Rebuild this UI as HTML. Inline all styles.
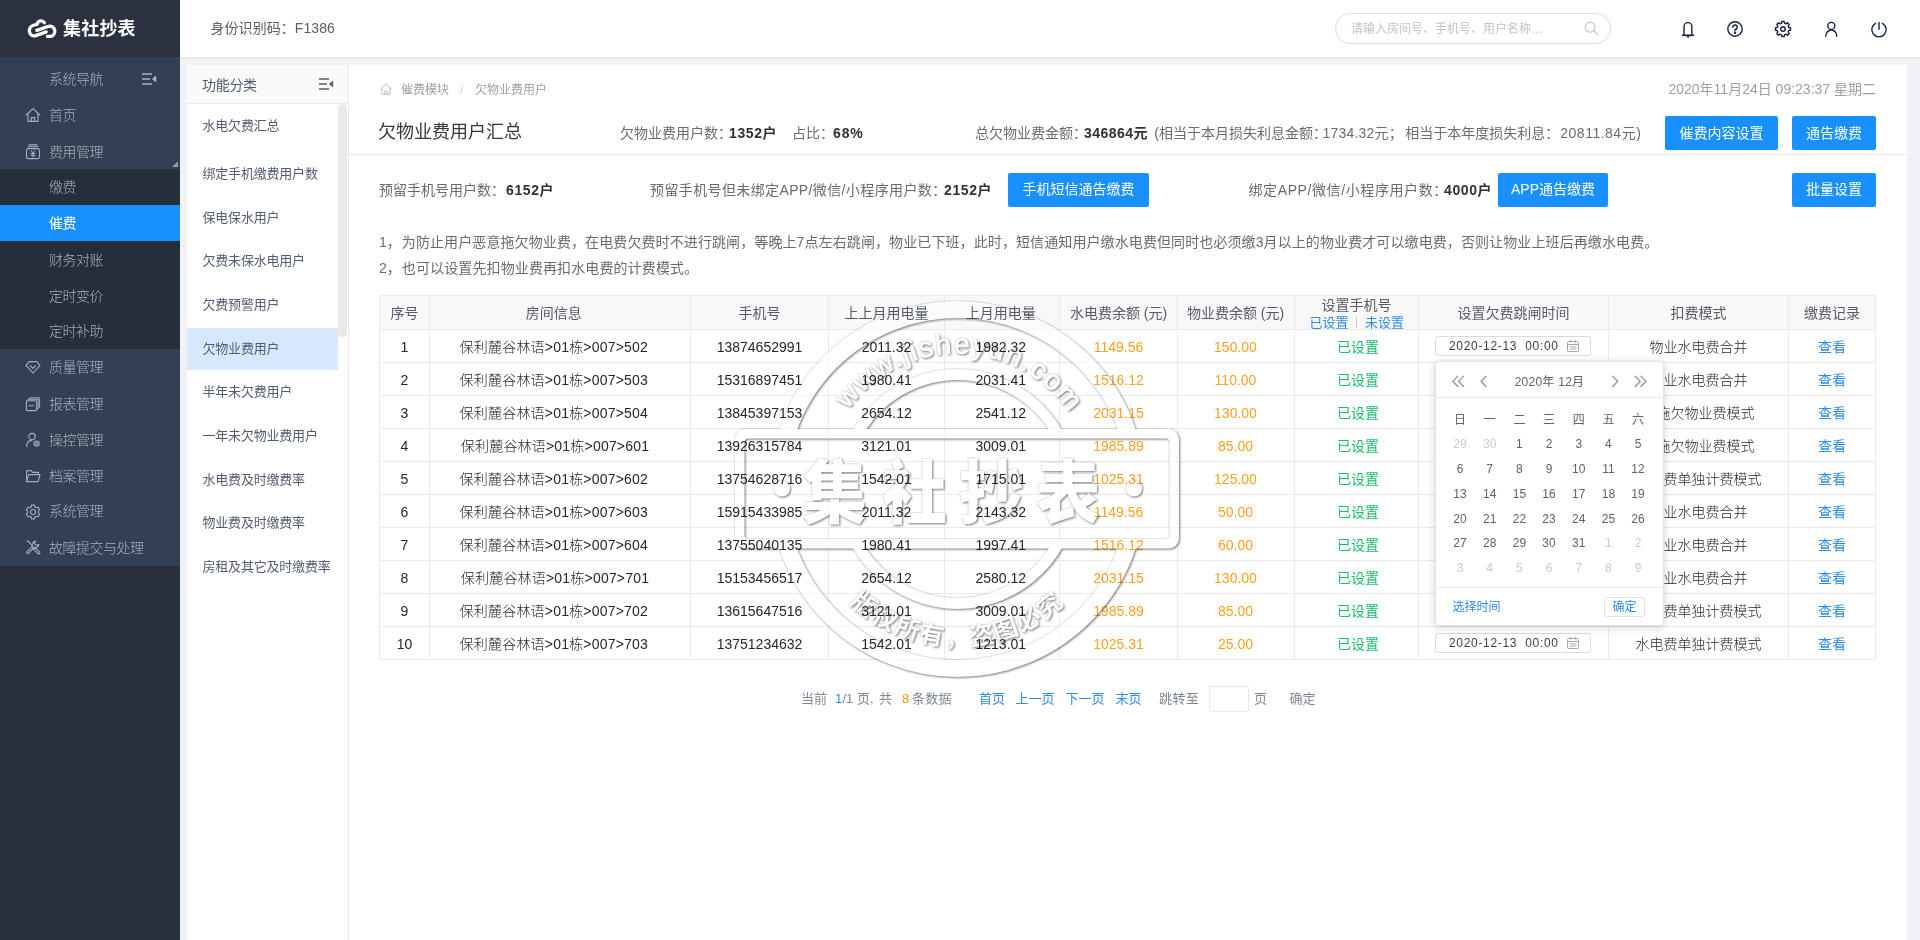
<!DOCTYPE html>
<html lang="zh-CN"><head><meta charset="utf-8"><title>欠物业费用户汇总</title>
<style>
*{box-sizing:border-box;margin:0;padding:0}
html,body{width:1920px;height:940px;overflow:hidden}
body{background:#f0f2f5;font-family:"Liberation Sans","Noto Sans CJK SC",sans-serif;position:relative;-webkit-font-smoothing:antialiased;font-weight:300}
.t{position:absolute;white-space:nowrap;display:block}
.a{position:absolute}
svg{position:absolute;overflow:visible}
.ic{fill:none;stroke:#a4aebf;stroke-width:1.1;stroke-linecap:round;stroke-linejoin:round}
.hic{fill:none;stroke:#14233c;stroke-width:1.4;stroke-linecap:round;stroke-linejoin:round}
.btn{position:absolute;background:#1890ff;color:#fff;font-size:14px;font-weight:400;border-radius:2px;text-align:center;white-space:nowrap}
</style></head><body><div id="app" style="position:absolute;left:0;top:0;width:1920px;height:940px;will-change:transform">

<div class="a" style="left:0;top:0;width:180px;height:940px;background:#2a303d"></div>
<div class="a" style="left:0;top:0;width:180px;height:57px;background:#2a313f"></div>
<div class="a" style="left:0;top:57px;width:180px;height:509px;background:#353f53"></div>
<div class="a" style="left:0;top:169px;width:180px;height:180px;background:#272e3b"></div>
<div class="a" style="left:0;top:205px;width:180px;height:36px;background:#1890ff"></div>
<svg style="left:27px;top:19px" width="29" height="20" viewBox="0 0 29 20"><g fill="none" stroke="#fff" stroke-width="3.3" stroke-linecap="round" stroke-linejoin="round"><path d="M17.4 3.7A3.9 3.9 0 0 0 10.2 5.4C6 5.6 2.2 8 2.3 12.2A4.9 4.9 0 0 0 8.8 16.6L19.2 12.9"/><path d="M9.8 11.4L21.6 7.3A5 5 0 1 1 23.8 17.3L20.4 17.4"/></g></svg>
<span class="t" style="top:18.5px;font-size:18px;color:#fff;line-height:20px;font-weight:700;left:63px;letter-spacing:0.2px;font-family:"Liberation Sans","Noto Sans CJK SC",sans-serif;">集社抄表</span>
<span class="t" style="top:69px;font-size:14px;color:#a6b0c1;line-height:20px;font-weight:300;left:49px;letter-spacing:-0.5px;">系统导航</span>
<svg style="left:142px;top:73px" width="16" height="12" viewBox="0 0 16 12"><path d="M0 1H10M0 6H8M0 11H10" stroke="#abb4c4" stroke-width="1.6" fill="none"/><path d="M14.2 2.6V9.4L9.9 6Z" fill="#abb4c4"/></svg>
<span class="t" style="top:105px;font-size:14px;color:#a6b0c1;line-height:20px;font-weight:300;left:49px;letter-spacing:-0.5px;">首页</span>
<span class="t" style="top:141.5px;font-size:14px;color:#a6b0c1;line-height:20px;font-weight:300;left:49px;letter-spacing:-0.5px;">费用管理</span>
<span class="t" style="top:357px;font-size:14px;color:#a6b0c1;line-height:20px;font-weight:300;left:49px;letter-spacing:-0.5px;">质量管理</span>
<span class="t" style="top:393.5px;font-size:14px;color:#a6b0c1;line-height:20px;font-weight:300;left:49px;letter-spacing:-0.5px;">报表管理</span>
<span class="t" style="top:430px;font-size:14px;color:#a6b0c1;line-height:20px;font-weight:300;left:49px;letter-spacing:-0.5px;">操控管理</span>
<span class="t" style="top:465.5px;font-size:14px;color:#a6b0c1;line-height:20px;font-weight:300;left:49px;letter-spacing:-0.5px;">档案管理</span>
<span class="t" style="top:501px;font-size:14px;color:#a6b0c1;line-height:20px;font-weight:300;left:49px;letter-spacing:-0.5px;">系统管理</span>
<span class="t" style="top:538px;font-size:14px;color:#a6b0c1;line-height:20px;font-weight:300;left:49px;letter-spacing:-0.5px;">故障提交与处理</span>
<span class="t" style="top:177px;font-size:14px;color:#a6b0c1;line-height:20px;font-weight:300;left:49px;letter-spacing:-0.5px;">缴费</span>
<span class="t" style="top:213px;font-size:14px;color:#fff;line-height:20px;font-weight:400;left:49px;letter-spacing:-0.5px;">催费</span>
<span class="t" style="top:250px;font-size:14px;color:#a6b0c1;line-height:20px;font-weight:300;left:49px;letter-spacing:-0.5px;">财务对账</span>
<span class="t" style="top:286px;font-size:14px;color:#a6b0c1;line-height:20px;font-weight:300;left:49px;letter-spacing:-0.5px;">定时变价</span>
<span class="t" style="top:320.8px;font-size:14px;color:#a6b0c1;line-height:20px;font-weight:300;left:49px;letter-spacing:-0.5px;">定时补助</span>
<svg style="left:172px;top:161px" width="6" height="6" viewBox="0 0 6 6"><path d="M6 0V6H0Z" fill="#8f9bb0"/></svg>
<svg class="ic" style="left:25px;top:107px" width="16" height="16" viewBox="0 0 16 16"><path d="M1.2 8 L8 1.6 L14.8 8"/><path d="M3 7.2V14.4H13V7.2"/><path d="M6.3 14.4V10.6H9.7V14.4"/></svg>
<svg class="ic" style="left:25px;top:143.5px" width="16" height="16" viewBox="0 0 16 16"><rect x="1.5" y="4.6" width="13" height="10" rx="1.6"/><path d="M2.8 2.7H13.2M3.9 0.9H12.1"/><path d="M6.2 6.8L8 9L9.8 6.8M8 9V13M6 9.6H10M6 11.4H10" stroke-width="1"/></svg>
<svg class="ic" style="left:25px;top:359px" width="16" height="16" viewBox="0 0 16 16"><path d="M4.2 2.6H11.8L15 6.4L8 14L1 6.4Z"/><path d="M5.4 6.6L8 9.4L10.6 6.6"/></svg>
<svg class="ic" style="left:25px;top:395.5px" width="16" height="16" viewBox="0 0 16 16"><rect x="1.4" y="4.8" width="10.2" height="9.8" rx="0.8"/><path d="M3 4.6V3.3H13.1V12.8H11.8M4.6 3.1V1.8H14.6V11.2H13.3" stroke-width="1"/><path d="M4.2 9.7H8.8"/></svg>
<svg class="ic" style="left:25px;top:432px" width="16" height="16" viewBox="0 0 16 16"><circle cx="7" cy="4.6" r="3.2"/><path d="M1.6 14.6C1.8 10.6 4 8.6 6.8 8.4"/><circle cx="11.6" cy="11.6" r="2.6"/><circle cx="11.6" cy="11.6" r="0.8"/></svg>
<svg class="ic" style="left:25px;top:467.5px" width="16" height="16" viewBox="0 0 16 16"><path d="M1.6 13.6V2.6H6.2L7.6 4.4H13.4V6.4"/><path d="M1.6 13.6L3.6 6.6H15L13 13.6Z"/></svg>
<svg class="ic" style="left:25px;top:504px" width="16" height="16" viewBox="0 0 16 16"><path d="M6.06 2.96L6.40 1.08L9.60 1.08L9.94 2.96L11.40 3.80L13.19 3.16L14.79 5.92L13.33 7.16L13.33 8.84L14.79 10.08L13.19 12.84L11.40 12.20L9.94 13.04L9.60 14.92L6.40 14.92L6.06 13.04L4.60 12.20L2.81 12.84L1.21 10.08L2.67 8.84L2.67 7.16L1.21 5.92L2.81 3.16L4.60 3.80Z" stroke-linejoin="round"/><circle cx="8" cy="8" r="2.5"/></svg>
<svg class="ic" style="left:25px;top:539.2px" width="16" height="16" viewBox="0 0 16 16"><path d="M1.7 13.1L7.1 7.7L8.5 9.1L3.1 14.5A1 1 0 0 1 1.7 13.1Z"/><path d="M7.3 7.5C6.5 5.3 7.7 2.7 10.5 2.1L9.4 4.4L11.6 6.6L13.9 5.5C13.3 8.3 10.7 9.5 8.5 8.7"/><path d="M2 2.5L3.4 2L4.7 3.9L7.5 6.7"/><path d="M9.9 8.3L14.5 12.9A1.1 1.1 0 0 1 12.9 14.5L8.3 9.9Z"/></svg>
<div class="a" style="left:180px;top:0;width:1740px;height:57px;background:#fff;box-shadow:0 1px 2px rgba(0,21,41,.08)"></div>
<span class="t" style="top:17.7px;font-size:14px;color:#5e5e5e;line-height:20px;font-weight:400;left:210.4px;letter-spacing:0.08px;">身份识别码：F1386</span>
<div class="a" style="left:1335px;top:13px;width:276px;height:31px;border:1px solid #dcdee2;border-radius:16px;background:#fff;box-shadow:0 0 2px rgba(0,0,0,.06)"></div>
<span class="t" style="top:18.5px;font-size:12px;color:#bfc3ca;line-height:20px;font-weight:400;left:1351px;">请输入房间号、手机号、用户名称…</span>
<svg style="left:1584px;top:21px" width="15" height="15" viewBox="0 0 15 15" fill="none" stroke="#c5c8ce" stroke-width="1.2" stroke-linecap="round"><circle cx="6.2" cy="6.2" r="5"/><path d="M10 10L14 14"/></svg>
<svg class="hic" style="left:1679px;top:19.5px" width="18" height="18" viewBox="0 0 18 18"><path d="M5.05 15.2V6.5A3.9 3.9 0 0 1 12.85 6.5V15.2M3.5 15.3H14.5"/><path d="M8.3 16.7H9.7" stroke-width="1.6"/></svg>
<svg class="hic" style="left:1726px;top:19.5px" width="18" height="18" viewBox="0 0 18 18"><circle cx="9" cy="9" r="7.2"/><path d="M6.8 7.2A2.2 2.2 0 1 1 9 9.4V10.6" stroke-width="1.4"/><circle cx="9" cy="12.8" r="0.5" fill="#1c2438"/></svg>
<svg class="hic" style="left:1774px;top:19.5px" width="18" height="18" viewBox="0 0 18 18"><path d="M7.55 3.18L7.75 1.50L10.25 1.50L10.45 3.18L12.09 3.86L13.41 2.81L15.19 4.59L14.14 5.91L14.82 7.55L16.50 7.75L16.50 10.25L14.82 10.45L14.14 12.09L15.19 13.41L13.41 15.19L12.09 14.14L10.45 14.82L10.25 16.50L7.75 16.50L7.55 14.82L5.91 14.14L4.59 15.19L2.81 13.41L3.86 12.09L3.18 10.45L1.50 10.25L1.50 7.75L3.18 7.55L3.86 5.91L2.81 4.59L4.59 2.81L5.91 3.86Z"/><circle cx="9" cy="9" r="2.3"/></svg>
<svg class="hic" style="left:1822px;top:19.5px" width="18" height="18" viewBox="0 0 18 18"><circle cx="9.3" cy="5.9" r="3.5"/><path d="M3.8 16.2A5.5 6.2 0 0 1 14.8 16.2"/></svg>
<svg class="hic" style="left:1870px;top:19.5px" width="18" height="18" viewBox="0 0 18 18"><path d="M5.6 3.3A7.2 7.2 0 1 0 12.4 3.3M9 2.4V9.2"/></svg>
<div class="a" style="left:187px;top:65px;width:161px;height:875px;background:#fff"></div>
<div class="a" style="left:187px;top:65px;width:161px;height:39px;background:#fafafa;border-bottom:1px solid #e8eaec"></div>
<span class="t" style="top:75px;font-size:14px;color:#515a6e;line-height:20px;font-weight:400;left:202px;letter-spacing:-0.3px;">功能分类</span>
<svg style="left:319px;top:78px" width="16" height="12" viewBox="0 0 16 12"><path d="M0 1H10M0 6H8M0 11H10" stroke="#5a6070" stroke-width="1.6" fill="none"/><path d="M14.2 2.6V9.4L9.9 6Z" fill="#5a6070"/></svg>
<div class="a" style="left:338px;top:104px;width:9px;height:233px;background:#e9e9e9;border-radius:5px"></div>
<div class="a" style="left:187px;top:328px;width:151px;height:42px;background:#d8e8fc"></div>
<span class="t" style="top:115.8px;font-size:13px;color:#535c70;line-height:20px;font-weight:400;left:202.5px;letter-spacing:-0.2px;">水电欠费汇总</span>
<span class="t" style="top:163.6px;font-size:13px;color:#535c70;line-height:20px;font-weight:400;left:202.5px;letter-spacing:-0.2px;">绑定手机缴费用户数</span>
<span class="t" style="top:208px;font-size:13px;color:#535c70;line-height:20px;font-weight:400;left:202.5px;letter-spacing:-0.2px;">保电保水用户</span>
<span class="t" style="top:251px;font-size:13px;color:#535c70;line-height:20px;font-weight:400;left:202.5px;letter-spacing:-0.2px;">欠费未保水电用户</span>
<span class="t" style="top:295px;font-size:13px;color:#535c70;line-height:20px;font-weight:400;left:202.5px;letter-spacing:-0.2px;">欠费预警用户</span>
<span class="t" style="top:338.8px;font-size:13px;color:#535c70;line-height:20px;font-weight:400;left:202.5px;letter-spacing:-0.2px;">欠物业费用户</span>
<span class="t" style="top:382px;font-size:13px;color:#535c70;line-height:20px;font-weight:400;left:202.5px;letter-spacing:-0.2px;">半年未欠费用户</span>
<span class="t" style="top:426px;font-size:13px;color:#535c70;line-height:20px;font-weight:400;left:202.5px;letter-spacing:-0.2px;">一年未欠物业费用户</span>
<span class="t" style="top:470px;font-size:13px;color:#535c70;line-height:20px;font-weight:400;left:202.5px;letter-spacing:-0.2px;">水电费及时缴费率</span>
<span class="t" style="top:513px;font-size:13px;color:#535c70;line-height:20px;font-weight:400;left:202.5px;letter-spacing:-0.2px;">物业费及时缴费率</span>
<span class="t" style="top:557px;font-size:13px;color:#535c70;line-height:20px;font-weight:400;left:202.5px;letter-spacing:-0.2px;">房租及其它及时缴费率</span>
<div class="a" style="left:348px;top:65px;width:1px;height:875px;background:#e7e8eb"></div>
<div class="a" style="left:349px;top:65px;width:1558px;height:875px;background:#fff"></div>
<div class="a" style="left:349px;top:154px;width:1558px;height:1px;background:#e8eaec"></div>
<svg style="left:380px;top:83px" width="12" height="12" viewBox="0 0 12 12" fill="none" stroke="#b4b4b4" stroke-width="0.9" stroke-linejoin="round" stroke-linecap="round"><path d="M0.6 6L6 0.8L11.4 6"/><path d="M2 5.2V11.2H10V5.2"/><path d="M4.6 11.2V8.4H7.4V11.2"/></svg>
<span class="t" style="top:79.5px;font-size:12px;color:#a2a2a2;line-height:20px;font-weight:400;left:401px;">催费模块</span>
<span class="t" style="top:79.5px;font-size:12px;color:#d3d6dc;line-height:20px;left:460px;">/</span>
<span class="t" style="top:79.5px;font-size:12px;color:#a2a2a2;line-height:20px;font-weight:400;left:475px;">欠物业费用户</span>
<span class="t" style="top:79px;font-size:14px;color:#a0a0a0;line-height:20px;font-weight:400;left:1276px;width:600px;text-align:right;">2020年11月24日 09:23:37 星期二</span>
<span class="t" style="top:119px;font-size:18px;color:#383838;line-height:26px;font-weight:400;left:378px;">欠物业费用户汇总</span>
<span class="t" style="top:122.5px;font-size:14px;color:#696b70;line-height:20px;font-weight:400;left:620px;">欠物业费用户数：</span>
<span class="t" style="top:122.5px;font-size:14px;color:#303133;line-height:20px;font-weight:700;left:729px;letter-spacing:0.6px;">1352户</span>
<span class="t" style="top:122.5px;font-size:14px;color:#696b70;line-height:20px;font-weight:400;left:792px;">占比：</span>
<span class="t" style="top:122.5px;font-size:14px;color:#303133;line-height:20px;font-weight:700;left:833px;letter-spacing:0.9px;">68%</span>
<span class="t" style="top:122.5px;font-size:14px;color:#696b70;line-height:20px;font-weight:400;left:975px;">总欠物业费金额：</span>
<span class="t" style="top:122.5px;font-size:14px;color:#303133;line-height:20px;font-weight:700;left:1084px;letter-spacing:0.45px;">346864元</span>
<span class="t" style="top:122.5px;font-size:14px;color:#696b70;line-height:20px;font-weight:400;left:1154.3px;">(相当于本月损失利息金额：</span>
<span class="t" style="top:122.5px;font-size:14px;color:#696b70;line-height:20px;font-weight:400;left:1322.5px;letter-spacing:0.2px;">1734.32元；</span>
<span class="t" style="top:122.5px;font-size:14px;color:#696b70;line-height:20px;font-weight:400;left:1405.3px;">相当于本年度损失利息：</span>
<span class="t" style="top:122.5px;font-size:14px;color:#696b70;line-height:20px;font-weight:400;left:1560.3px;letter-spacing:0.5px;">20811.84元)</span>
<div class="btn" style="left:1665px;top:116px;width:113px;height:34px;line-height:34px">催费内容设置</div>
<div class="btn" style="left:1792px;top:116px;width:84px;height:34px;line-height:34px">通告缴费</div>
<span class="t" style="top:180px;font-size:14px;color:#696b70;line-height:20px;font-weight:400;left:379px;">预留手机号用户数：</span>
<span class="t" style="top:180px;font-size:14px;color:#303133;line-height:20px;font-weight:700;left:506px;letter-spacing:0.6px;">6152户</span>
<span class="t" style="top:180px;font-size:14px;color:#696b70;line-height:20px;font-weight:400;left:650px;letter-spacing:0.38px;">预留手机号但未绑定APP/微信/小程序用户数：</span>
<span class="t" style="top:180px;font-size:14px;color:#303133;line-height:20px;font-weight:700;left:944px;letter-spacing:0.6px;">2152户</span>
<div class="btn" style="left:1008px;top:173px;width:141px;height:34px;line-height:33px">手机短信通告缴费</div>
<span class="t" style="top:180px;font-size:14px;color:#696b70;line-height:20px;font-weight:400;left:1248.5px;letter-spacing:0.6px;">绑定APP/微信/小程序用户数：</span>
<span class="t" style="top:180px;font-size:14px;color:#303133;line-height:20px;font-weight:700;left:1444px;letter-spacing:0.6px;">4000户</span>
<div class="btn" style="left:1498px;top:173px;width:110px;height:34px;line-height:33px">APP通告缴费</div>
<div class="btn" style="left:1792px;top:173px;width:84px;height:34px;line-height:33px">批量设置</div>
<span class="t" style="top:231.5px;font-size:14px;color:#696b70;line-height:20px;font-weight:400;left:379px;">1，</span>
<span class="t" style="top:231.5px;font-size:14px;color:#696b70;line-height:20px;font-weight:400;left:401.8px;letter-spacing:0.1px;">为防止用户恶意拖欠物业费，在电费欠费时不进行跳闸，等晚上7点左右跳闸，物业已下班，此时，短信通知用户缴水电费但同时也必须缴3月以上的物业费才可以缴电费，否则让物业上班后再缴水电费。</span>
<span class="t" style="top:257.5px;font-size:14px;color:#696b70;line-height:20px;font-weight:400;left:379px;">2，</span>
<span class="t" style="top:257.5px;font-size:14px;color:#696b70;line-height:20px;font-weight:400;left:401.8px;letter-spacing:0.12px;">也可以设置先扣物业费再扣水电费的计费模式。</span>
<div class="a" style="left:379px;top:295px;width:1497px;height:35px;background:#f8f8f9"></div>
<div class="a" style="left:379px;top:295px;width:1497px;height:1px;background:#e8eaec"></div>
<div class="a" style="left:379px;top:329px;width:1497px;height:1px;background:#e8eaec"></div>
<div class="a" style="left:379px;top:362px;width:1497px;height:1px;background:#e8eaec"></div>
<div class="a" style="left:379px;top:395px;width:1497px;height:1px;background:#e8eaec"></div>
<div class="a" style="left:379px;top:428px;width:1497px;height:1px;background:#e8eaec"></div>
<div class="a" style="left:379px;top:461px;width:1497px;height:1px;background:#e8eaec"></div>
<div class="a" style="left:379px;top:494px;width:1497px;height:1px;background:#e8eaec"></div>
<div class="a" style="left:379px;top:527px;width:1497px;height:1px;background:#e8eaec"></div>
<div class="a" style="left:379px;top:560px;width:1497px;height:1px;background:#e8eaec"></div>
<div class="a" style="left:379px;top:593px;width:1497px;height:1px;background:#e8eaec"></div>
<div class="a" style="left:379px;top:626px;width:1497px;height:1px;background:#e8eaec"></div>
<div class="a" style="left:379px;top:659px;width:1497px;height:1px;background:#e8eaec"></div>
<div class="a" style="left:379px;top:295px;width:1px;height:365px;background:#e8eaec"></div>
<div class="a" style="left:429px;top:295px;width:1px;height:365px;background:#e8eaec"></div>
<div class="a" style="left:690px;top:295px;width:1px;height:365px;background:#e8eaec"></div>
<div class="a" style="left:828px;top:295px;width:1px;height:365px;background:#e8eaec"></div>
<div class="a" style="left:944px;top:295px;width:1px;height:365px;background:#e8eaec"></div>
<div class="a" style="left:1059px;top:295px;width:1px;height:365px;background:#e8eaec"></div>
<div class="a" style="left:1177px;top:295px;width:1px;height:365px;background:#e8eaec"></div>
<div class="a" style="left:1294px;top:295px;width:1px;height:365px;background:#e8eaec"></div>
<div class="a" style="left:1418px;top:295px;width:1px;height:365px;background:#e8eaec"></div>
<div class="a" style="left:1608px;top:295px;width:1px;height:365px;background:#e8eaec"></div>
<div class="a" style="left:1788px;top:295px;width:1px;height:365px;background:#e8eaec"></div>
<div class="a" style="left:1875px;top:295px;width:1px;height:365px;background:#e8eaec"></div>
<svg style="left:0;top:0;pointer-events:none" width="1920" height="940" viewBox="0 0 1920 940"><defs><filter id="wsh" filterUnits="userSpaceOnUse" x="700" y="250" width="520" height="480" color-interpolation-filters="sRGB"><feGaussianBlur in="SourceAlpha" stdDeviation="0.9" result="bl"/><feOffset in="bl" dx="1.3" dy="1.3" result="off"/><feComposite in="off" in2="SourceAlpha" operator="out" result="sh"/><feFlood flood-color="#000" flood-opacity="0.52" result="fc"/><feComposite in="fc" in2="sh" operator="in" result="shadow"/><feOffset in="SourceAlpha" dx="-0.7" dy="-0.7" result="off2"/><feComposite in="off2" in2="SourceAlpha" operator="out" result="hl"/><feFlood flood-color="#000" flood-opacity="0.07" result="fc2"/><feComposite in="fc2" in2="hl" operator="in" result="hl2"/><feMerge><feMergeNode in="hl2"/><feMergeNode in="shadow"/></feMerge></filter><clipPath id="wclip"><path clip-rule="evenodd" d="M700 250H1220V730H700Z M735.5 429.5H1178.5V548H735.5Z"/></clipPath><path id="wtop" d="M822.00 489.00A135.5 135.5 0 0 1 1093.00 489.00"/><path id="wbot" d="M800.50 489.00A157 157 0 0 0 1114.50 489.00"/></defs><g fill="#fff" stroke="none" opacity="0.6"><g clip-path="url(#wclip)">
<circle cx="957.5" cy="489" r="179.5" fill="none" stroke="#fff" stroke-width="17"/>
<circle cx="957.5" cy="489" r="114.5" fill="none" stroke="#fff" stroke-width="11"/>
<text font-family="Liberation Sans,sans-serif" font-size="28" letter-spacing="1.9" text-anchor="middle" stroke="#fff" stroke-width="0.9" stroke-linejoin="round"><textPath href="#wtop" startOffset="50.6%">www.jisheyun.com</textPath></text>
<text font-family="Liberation Sans,Noto Sans CJK SC,sans-serif" font-weight="700" font-size="24.5" letter-spacing="1.9" text-anchor="middle"><textPath href="#wbot" startOffset="50%">版权所有，盗图必究</textPath></text>
</g>
<path fill-rule="evenodd" d="M745 429H1169A10 10 0 0 1 1179 439V538.5A10 10 0 0 1 1169 548.5H745A10 10 0 0 1 735 538.5V439A10 10 0 0 1 745 429Z M748.5 438.5H1165.5A4 4 0 0 1 1169.5 442.5V535A4 4 0 0 1 1165.5 539H748.5A4 4 0 0 1 744.5 535V442.5A4 4 0 0 1 748.5 438.5Z"/>
<text x="897.31" y="517.6" transform="scale(0.93 1)" font-family="Liberation Sans,Noto Sans CJK SC,sans-serif" font-weight="900" font-size="69.5" text-anchor="middle">集</text>
<text x="983.33" y="517.6" transform="scale(0.93 1)" font-family="Liberation Sans,Noto Sans CJK SC,sans-serif" font-weight="900" font-size="69.5" text-anchor="middle">社</text>
<text x="1065.59" y="517.6" transform="scale(0.93 1)" font-family="Liberation Sans,Noto Sans CJK SC,sans-serif" font-weight="900" font-size="69.5" text-anchor="middle">抄</text>
<text x="1148.39" y="517.6" transform="scale(0.93 1)" font-family="Liberation Sans,Noto Sans CJK SC,sans-serif" font-weight="900" font-size="69.5" text-anchor="middle">表</text>
<circle cx="782" cy="488.6" r="8"/><circle cx="1134" cy="488.6" r="8"/></g></svg>
<span class="t" style="top:303px;font-size:14px;color:#555a66;line-height:20px;font-weight:400;left:204.5px;width:400px;text-align:center;">序号</span>
<span class="t" style="top:303px;font-size:14px;color:#555a66;line-height:20px;font-weight:400;left:353.8px;width:400px;text-align:center;">房间信息</span>
<span class="t" style="top:303px;font-size:14px;color:#555a66;line-height:20px;font-weight:400;left:559.5px;width:400px;text-align:center;">手机号</span>
<span class="t" style="top:303px;font-size:14px;color:#555a66;line-height:20px;font-weight:400;left:686.5px;width:400px;text-align:center;">上上月用电量</span>
<span class="t" style="top:303px;font-size:14px;color:#555a66;line-height:20px;font-weight:400;left:800.8px;width:400px;text-align:center;">上月用电量</span>
<span class="t" style="top:303px;font-size:14px;color:#555a66;line-height:20px;font-weight:400;left:918.5px;width:400px;text-align:center;">水电费余额 (元)</span>
<span class="t" style="top:303px;font-size:14px;color:#555a66;line-height:20px;font-weight:400;left:1035.5px;width:400px;text-align:center;">物业费余额 (元)</span>
<span class="t" style="top:303px;font-size:14px;color:#555a66;line-height:20px;font-weight:400;left:1313.5px;width:400px;text-align:center;">设置欠费跳闸时间</span>
<span class="t" style="top:303px;font-size:14px;color:#555a66;line-height:20px;font-weight:400;left:1498.5px;width:400px;text-align:center;">扣费模式</span>
<span class="t" style="top:303px;font-size:14px;color:#555a66;line-height:20px;font-weight:400;left:1632px;width:400px;text-align:center;">缴费记录</span>
<span class="t" style="top:295px;font-size:14px;color:#555a66;line-height:20px;font-weight:400;left:1156.5px;width:400px;text-align:center;">设置手机号</span>
<span class="t" style="top:312.5px;font-size:13px;color:#2d8cf0;line-height:20px;font-weight:400;left:1309.5px;">已设置</span>
<div class="a" style="left:1356px;top:317px;width:1px;height:11px;background:#c5c8ce"></div>
<span class="t" style="top:312.5px;font-size:13px;color:#2d8cf0;line-height:20px;font-weight:400;left:1365px;">未设置</span>
<span class="t" style="top:336.5px;font-size:14px;color:#262626;line-height:20px;left:204.5px;width:400px;text-align:center;">1</span>
<span class="t" style="top:336.5px;font-size:14px;color:#262626;line-height:20px;left:353.8px;width:400px;text-align:center;letter-spacing:0.2px;">保利麓谷林语&gt;01栋&gt;007&gt;502</span>
<span class="t" style="top:336.5px;font-size:14px;color:#262626;line-height:20px;left:559.5px;width:400px;text-align:center;">13874652991</span>
<span class="t" style="top:336.5px;font-size:14px;color:#262626;line-height:20px;left:686.5px;width:400px;text-align:center;">2011.32</span>
<span class="t" style="top:336.5px;font-size:14px;color:#262626;line-height:20px;left:800.8px;width:400px;text-align:center;">1982.32</span>
<span class="t" style="top:336.5px;font-size:14px;color:#ff9f1c;line-height:20px;left:918.5px;width:400px;text-align:center;">1149.56</span>
<span class="t" style="top:336.5px;font-size:14px;color:#ff9f1c;line-height:20px;left:1035.5px;width:400px;text-align:center;">150.00</span>
<span class="t" style="top:337px;font-size:14px;color:#19be6b;line-height:20px;font-weight:400;left:1158px;width:400px;text-align:center;">已设置</span>
<div class="a" style="left:1435px;top:336px;width:156px;height:20px;border:1px solid #d9dbe0;border-radius:3px;background:#fff"></div>
<span class="t" style="top:336px;font-size:12px;color:#3c3e44;line-height:20px;left:1449px;letter-spacing:0.68px;">2020-12-13&nbsp; 00:00</span>
<svg style="left:1567px;top:340px" width="12" height="12" viewBox="0 0 12 12" fill="none" stroke="#9a9da5" stroke-width="0.9"><rect x="0.5" y="1.5" width="11" height="10" rx="1"/><path d="M0.5 4.5H11.5M3.5 0.2V2.6M8.5 0.2V2.6M2.6 6.8H9.4M2.6 9H9.4"/></svg>
<span class="t" style="top:336.5px;font-size:14px;color:#262626;line-height:20px;left:1498.5px;width:400px;text-align:center;">物业水电费合并</span>
<span class="t" style="top:336.5px;font-size:14px;color:#2d8cf0;line-height:20px;font-weight:400;left:1632px;width:400px;text-align:center;">查看</span>
<span class="t" style="top:369.5px;font-size:14px;color:#262626;line-height:20px;left:204.5px;width:400px;text-align:center;">2</span>
<span class="t" style="top:369.5px;font-size:14px;color:#262626;line-height:20px;left:353.8px;width:400px;text-align:center;letter-spacing:0.2px;">保利麓谷林语&gt;01栋&gt;007&gt;503</span>
<span class="t" style="top:369.5px;font-size:14px;color:#262626;line-height:20px;left:559.5px;width:400px;text-align:center;">15316897451</span>
<span class="t" style="top:369.5px;font-size:14px;color:#262626;line-height:20px;left:686.5px;width:400px;text-align:center;">1980.41</span>
<span class="t" style="top:369.5px;font-size:14px;color:#262626;line-height:20px;left:800.8px;width:400px;text-align:center;">2031.41</span>
<span class="t" style="top:369.5px;font-size:14px;color:#ff9f1c;line-height:20px;left:918.5px;width:400px;text-align:center;">1516.12</span>
<span class="t" style="top:369.5px;font-size:14px;color:#ff9f1c;line-height:20px;left:1035.5px;width:400px;text-align:center;">110.00</span>
<span class="t" style="top:370px;font-size:14px;color:#19be6b;line-height:20px;font-weight:400;left:1158px;width:400px;text-align:center;">已设置</span>
<div class="a" style="left:1435px;top:369px;width:156px;height:20px;border:1px solid #d9dbe0;border-radius:3px;background:#fff"></div>
<span class="t" style="top:369px;font-size:12px;color:#3c3e44;line-height:20px;left:1449px;letter-spacing:0.68px;">2020-12-13&nbsp; 00:00</span>
<svg style="left:1567px;top:373px" width="12" height="12" viewBox="0 0 12 12" fill="none" stroke="#9a9da5" stroke-width="0.9"><rect x="0.5" y="1.5" width="11" height="10" rx="1"/><path d="M0.5 4.5H11.5M3.5 0.2V2.6M8.5 0.2V2.6M2.6 6.8H9.4M2.6 9H9.4"/></svg>
<span class="t" style="top:369.5px;font-size:14px;color:#262626;line-height:20px;left:1498.5px;width:400px;text-align:center;">物业水电费合并</span>
<span class="t" style="top:369.5px;font-size:14px;color:#2d8cf0;line-height:20px;font-weight:400;left:1632px;width:400px;text-align:center;">查看</span>
<span class="t" style="top:402.5px;font-size:14px;color:#262626;line-height:20px;left:204.5px;width:400px;text-align:center;">3</span>
<span class="t" style="top:402.5px;font-size:14px;color:#262626;line-height:20px;left:353.8px;width:400px;text-align:center;letter-spacing:0.2px;">保利麓谷林语&gt;01栋&gt;007&gt;504</span>
<span class="t" style="top:402.5px;font-size:14px;color:#262626;line-height:20px;left:559.5px;width:400px;text-align:center;">13845397153</span>
<span class="t" style="top:402.5px;font-size:14px;color:#262626;line-height:20px;left:686.5px;width:400px;text-align:center;">2654.12</span>
<span class="t" style="top:402.5px;font-size:14px;color:#262626;line-height:20px;left:800.8px;width:400px;text-align:center;">2541.12</span>
<span class="t" style="top:402.5px;font-size:14px;color:#ff9f1c;line-height:20px;left:918.5px;width:400px;text-align:center;">2031.15</span>
<span class="t" style="top:402.5px;font-size:14px;color:#ff9f1c;line-height:20px;left:1035.5px;width:400px;text-align:center;">130.00</span>
<span class="t" style="top:403px;font-size:14px;color:#19be6b;line-height:20px;font-weight:400;left:1158px;width:400px;text-align:center;">已设置</span>
<div class="a" style="left:1435px;top:402px;width:156px;height:20px;border:1px solid #d9dbe0;border-radius:3px;background:#fff"></div>
<span class="t" style="top:402px;font-size:12px;color:#3c3e44;line-height:20px;left:1449px;letter-spacing:0.68px;">2020-12-13&nbsp; 00:00</span>
<svg style="left:1567px;top:406px" width="12" height="12" viewBox="0 0 12 12" fill="none" stroke="#9a9da5" stroke-width="0.9"><rect x="0.5" y="1.5" width="11" height="10" rx="1"/><path d="M0.5 4.5H11.5M3.5 0.2V2.6M8.5 0.2V2.6M2.6 6.8H9.4M2.6 9H9.4"/></svg>
<span class="t" style="top:402.5px;font-size:14px;color:#262626;line-height:20px;left:1498.5px;width:400px;text-align:center;">实施欠物业费模式</span>
<span class="t" style="top:402.5px;font-size:14px;color:#2d8cf0;line-height:20px;font-weight:400;left:1632px;width:400px;text-align:center;">查看</span>
<span class="t" style="top:435.5px;font-size:14px;color:#262626;line-height:20px;left:204.5px;width:400px;text-align:center;">4</span>
<span class="t" style="top:435.5px;font-size:14px;color:#262626;line-height:20px;left:355px;width:400px;text-align:center;letter-spacing:0.2px;">保利麓谷林语&gt;01栋&gt;007&gt;601</span>
<span class="t" style="top:435.5px;font-size:14px;color:#262626;line-height:20px;left:559.5px;width:400px;text-align:center;">13926315784</span>
<span class="t" style="top:435.5px;font-size:14px;color:#262626;line-height:20px;left:686.5px;width:400px;text-align:center;">3121.01</span>
<span class="t" style="top:435.5px;font-size:14px;color:#262626;line-height:20px;left:800.8px;width:400px;text-align:center;">3009.01</span>
<span class="t" style="top:435.5px;font-size:14px;color:#ff9f1c;line-height:20px;left:918.5px;width:400px;text-align:center;">1985.89</span>
<span class="t" style="top:435.5px;font-size:14px;color:#ff9f1c;line-height:20px;left:1035.5px;width:400px;text-align:center;">85.00</span>
<span class="t" style="top:436px;font-size:14px;color:#19be6b;line-height:20px;font-weight:400;left:1158px;width:400px;text-align:center;">已设置</span>
<div class="a" style="left:1435px;top:435px;width:156px;height:20px;border:1px solid #d9dbe0;border-radius:3px;background:#fff"></div>
<span class="t" style="top:435px;font-size:12px;color:#3c3e44;line-height:20px;left:1449px;letter-spacing:0.68px;">2020-12-13&nbsp; 00:00</span>
<svg style="left:1567px;top:439px" width="12" height="12" viewBox="0 0 12 12" fill="none" stroke="#9a9da5" stroke-width="0.9"><rect x="0.5" y="1.5" width="11" height="10" rx="1"/><path d="M0.5 4.5H11.5M3.5 0.2V2.6M8.5 0.2V2.6M2.6 6.8H9.4M2.6 9H9.4"/></svg>
<span class="t" style="top:435.5px;font-size:14px;color:#262626;line-height:20px;left:1498.5px;width:400px;text-align:center;">实施欠物业费模式</span>
<span class="t" style="top:435.5px;font-size:14px;color:#2d8cf0;line-height:20px;font-weight:400;left:1632px;width:400px;text-align:center;">查看</span>
<span class="t" style="top:468.5px;font-size:14px;color:#262626;line-height:20px;left:204.5px;width:400px;text-align:center;">5</span>
<span class="t" style="top:468.5px;font-size:14px;color:#262626;line-height:20px;left:353.8px;width:400px;text-align:center;letter-spacing:0.2px;">保利麓谷林语&gt;01栋&gt;007&gt;602</span>
<span class="t" style="top:468.5px;font-size:14px;color:#262626;line-height:20px;left:559.5px;width:400px;text-align:center;">13754628716</span>
<span class="t" style="top:468.5px;font-size:14px;color:#262626;line-height:20px;left:686.5px;width:400px;text-align:center;">1542.01</span>
<span class="t" style="top:468.5px;font-size:14px;color:#262626;line-height:20px;left:800.8px;width:400px;text-align:center;">1715.01</span>
<span class="t" style="top:468.5px;font-size:14px;color:#ff9f1c;line-height:20px;left:918.5px;width:400px;text-align:center;">1025.31</span>
<span class="t" style="top:468.5px;font-size:14px;color:#ff9f1c;line-height:20px;left:1035.5px;width:400px;text-align:center;">125.00</span>
<span class="t" style="top:469px;font-size:14px;color:#19be6b;line-height:20px;font-weight:400;left:1158px;width:400px;text-align:center;">已设置</span>
<div class="a" style="left:1435px;top:468px;width:156px;height:20px;border:1px solid #d9dbe0;border-radius:3px;background:#fff"></div>
<span class="t" style="top:468px;font-size:12px;color:#3c3e44;line-height:20px;left:1449px;letter-spacing:0.68px;">2020-12-13&nbsp; 00:00</span>
<svg style="left:1567px;top:472px" width="12" height="12" viewBox="0 0 12 12" fill="none" stroke="#9a9da5" stroke-width="0.9"><rect x="0.5" y="1.5" width="11" height="10" rx="1"/><path d="M0.5 4.5H11.5M3.5 0.2V2.6M8.5 0.2V2.6M2.6 6.8H9.4M2.6 9H9.4"/></svg>
<span class="t" style="top:468.5px;font-size:14px;color:#262626;line-height:20px;left:1498.5px;width:400px;text-align:center;">水电费单独计费模式</span>
<span class="t" style="top:468.5px;font-size:14px;color:#2d8cf0;line-height:20px;font-weight:400;left:1632px;width:400px;text-align:center;">查看</span>
<span class="t" style="top:501.5px;font-size:14px;color:#262626;line-height:20px;left:204.5px;width:400px;text-align:center;">6</span>
<span class="t" style="top:501.5px;font-size:14px;color:#262626;line-height:20px;left:353.8px;width:400px;text-align:center;letter-spacing:0.2px;">保利麓谷林语&gt;01栋&gt;007&gt;603</span>
<span class="t" style="top:501.5px;font-size:14px;color:#262626;line-height:20px;left:559.5px;width:400px;text-align:center;">15915433985</span>
<span class="t" style="top:501.5px;font-size:14px;color:#262626;line-height:20px;left:686.5px;width:400px;text-align:center;">2011.32</span>
<span class="t" style="top:501.5px;font-size:14px;color:#262626;line-height:20px;left:800.8px;width:400px;text-align:center;">2143.32</span>
<span class="t" style="top:501.5px;font-size:14px;color:#ff9f1c;line-height:20px;left:918.5px;width:400px;text-align:center;">1149.56</span>
<span class="t" style="top:501.5px;font-size:14px;color:#ff9f1c;line-height:20px;left:1035.5px;width:400px;text-align:center;">50.00</span>
<span class="t" style="top:502px;font-size:14px;color:#19be6b;line-height:20px;font-weight:400;left:1158px;width:400px;text-align:center;">已设置</span>
<div class="a" style="left:1435px;top:501px;width:156px;height:20px;border:1px solid #d9dbe0;border-radius:3px;background:#fff"></div>
<span class="t" style="top:501px;font-size:12px;color:#3c3e44;line-height:20px;left:1449px;letter-spacing:0.68px;">2020-12-13&nbsp; 00:00</span>
<svg style="left:1567px;top:505px" width="12" height="12" viewBox="0 0 12 12" fill="none" stroke="#9a9da5" stroke-width="0.9"><rect x="0.5" y="1.5" width="11" height="10" rx="1"/><path d="M0.5 4.5H11.5M3.5 0.2V2.6M8.5 0.2V2.6M2.6 6.8H9.4M2.6 9H9.4"/></svg>
<span class="t" style="top:501.5px;font-size:14px;color:#262626;line-height:20px;left:1498.5px;width:400px;text-align:center;">物业水电费合并</span>
<span class="t" style="top:501.5px;font-size:14px;color:#2d8cf0;line-height:20px;font-weight:400;left:1632px;width:400px;text-align:center;">查看</span>
<span class="t" style="top:534.5px;font-size:14px;color:#262626;line-height:20px;left:204.5px;width:400px;text-align:center;">7</span>
<span class="t" style="top:534.5px;font-size:14px;color:#262626;line-height:20px;left:353.8px;width:400px;text-align:center;letter-spacing:0.2px;">保利麓谷林语&gt;01栋&gt;007&gt;604</span>
<span class="t" style="top:534.5px;font-size:14px;color:#262626;line-height:20px;left:559.5px;width:400px;text-align:center;">13755040135</span>
<span class="t" style="top:534.5px;font-size:14px;color:#262626;line-height:20px;left:686.5px;width:400px;text-align:center;">1980.41</span>
<span class="t" style="top:534.5px;font-size:14px;color:#262626;line-height:20px;left:800.8px;width:400px;text-align:center;">1997.41</span>
<span class="t" style="top:534.5px;font-size:14px;color:#ff9f1c;line-height:20px;left:918.5px;width:400px;text-align:center;">1516.12</span>
<span class="t" style="top:534.5px;font-size:14px;color:#ff9f1c;line-height:20px;left:1035.5px;width:400px;text-align:center;">60.00</span>
<span class="t" style="top:535px;font-size:14px;color:#19be6b;line-height:20px;font-weight:400;left:1158px;width:400px;text-align:center;">已设置</span>
<div class="a" style="left:1435px;top:534px;width:156px;height:20px;border:1px solid #d9dbe0;border-radius:3px;background:#fff"></div>
<span class="t" style="top:534px;font-size:12px;color:#3c3e44;line-height:20px;left:1449px;letter-spacing:0.68px;">2020-12-13&nbsp; 00:00</span>
<svg style="left:1567px;top:538px" width="12" height="12" viewBox="0 0 12 12" fill="none" stroke="#9a9da5" stroke-width="0.9"><rect x="0.5" y="1.5" width="11" height="10" rx="1"/><path d="M0.5 4.5H11.5M3.5 0.2V2.6M8.5 0.2V2.6M2.6 6.8H9.4M2.6 9H9.4"/></svg>
<span class="t" style="top:534.5px;font-size:14px;color:#262626;line-height:20px;left:1498.5px;width:400px;text-align:center;">物业水电费合并</span>
<span class="t" style="top:534.5px;font-size:14px;color:#2d8cf0;line-height:20px;font-weight:400;left:1632px;width:400px;text-align:center;">查看</span>
<span class="t" style="top:567.5px;font-size:14px;color:#262626;line-height:20px;left:204.5px;width:400px;text-align:center;">8</span>
<span class="t" style="top:567.5px;font-size:14px;color:#262626;line-height:20px;left:355px;width:400px;text-align:center;letter-spacing:0.2px;">保利麓谷林语&gt;01栋&gt;007&gt;701</span>
<span class="t" style="top:567.5px;font-size:14px;color:#262626;line-height:20px;left:559.5px;width:400px;text-align:center;">15153456517</span>
<span class="t" style="top:567.5px;font-size:14px;color:#262626;line-height:20px;left:686.5px;width:400px;text-align:center;">2654.12</span>
<span class="t" style="top:567.5px;font-size:14px;color:#262626;line-height:20px;left:800.8px;width:400px;text-align:center;">2580.12</span>
<span class="t" style="top:567.5px;font-size:14px;color:#ff9f1c;line-height:20px;left:918.5px;width:400px;text-align:center;">2031.15</span>
<span class="t" style="top:567.5px;font-size:14px;color:#ff9f1c;line-height:20px;left:1035.5px;width:400px;text-align:center;">130.00</span>
<span class="t" style="top:568px;font-size:14px;color:#19be6b;line-height:20px;font-weight:400;left:1158px;width:400px;text-align:center;">已设置</span>
<div class="a" style="left:1435px;top:567px;width:156px;height:20px;border:1px solid #d9dbe0;border-radius:3px;background:#fff"></div>
<span class="t" style="top:567px;font-size:12px;color:#3c3e44;line-height:20px;left:1449px;letter-spacing:0.68px;">2020-12-13&nbsp; 00:00</span>
<svg style="left:1567px;top:571px" width="12" height="12" viewBox="0 0 12 12" fill="none" stroke="#9a9da5" stroke-width="0.9"><rect x="0.5" y="1.5" width="11" height="10" rx="1"/><path d="M0.5 4.5H11.5M3.5 0.2V2.6M8.5 0.2V2.6M2.6 6.8H9.4M2.6 9H9.4"/></svg>
<span class="t" style="top:567.5px;font-size:14px;color:#262626;line-height:20px;left:1498.5px;width:400px;text-align:center;">物业水电费合并</span>
<span class="t" style="top:567.5px;font-size:14px;color:#2d8cf0;line-height:20px;font-weight:400;left:1632px;width:400px;text-align:center;">查看</span>
<span class="t" style="top:600.5px;font-size:14px;color:#262626;line-height:20px;left:204.5px;width:400px;text-align:center;">9</span>
<span class="t" style="top:600.5px;font-size:14px;color:#262626;line-height:20px;left:353.8px;width:400px;text-align:center;letter-spacing:0.2px;">保利麓谷林语&gt;01栋&gt;007&gt;702</span>
<span class="t" style="top:600.5px;font-size:14px;color:#262626;line-height:20px;left:559.5px;width:400px;text-align:center;">13615647516</span>
<span class="t" style="top:600.5px;font-size:14px;color:#262626;line-height:20px;left:686.5px;width:400px;text-align:center;">3121.01</span>
<span class="t" style="top:600.5px;font-size:14px;color:#262626;line-height:20px;left:800.8px;width:400px;text-align:center;">3009.01</span>
<span class="t" style="top:600.5px;font-size:14px;color:#ff9f1c;line-height:20px;left:918.5px;width:400px;text-align:center;">1985.89</span>
<span class="t" style="top:600.5px;font-size:14px;color:#ff9f1c;line-height:20px;left:1035.5px;width:400px;text-align:center;">85.00</span>
<span class="t" style="top:601px;font-size:14px;color:#19be6b;line-height:20px;font-weight:400;left:1158px;width:400px;text-align:center;">已设置</span>
<div class="a" style="left:1435px;top:600px;width:156px;height:20px;border:1px solid #d9dbe0;border-radius:3px;background:#fff"></div>
<span class="t" style="top:600px;font-size:12px;color:#3c3e44;line-height:20px;left:1449px;letter-spacing:0.68px;">2020-12-13&nbsp; 00:00</span>
<svg style="left:1567px;top:604px" width="12" height="12" viewBox="0 0 12 12" fill="none" stroke="#9a9da5" stroke-width="0.9"><rect x="0.5" y="1.5" width="11" height="10" rx="1"/><path d="M0.5 4.5H11.5M3.5 0.2V2.6M8.5 0.2V2.6M2.6 6.8H9.4M2.6 9H9.4"/></svg>
<span class="t" style="top:600.5px;font-size:14px;color:#262626;line-height:20px;left:1498.5px;width:400px;text-align:center;">水电费单独计费模式</span>
<span class="t" style="top:600.5px;font-size:14px;color:#2d8cf0;line-height:20px;font-weight:400;left:1632px;width:400px;text-align:center;">查看</span>
<span class="t" style="top:633.5px;font-size:14px;color:#262626;line-height:20px;left:204.5px;width:400px;text-align:center;">10</span>
<span class="t" style="top:633.5px;font-size:14px;color:#262626;line-height:20px;left:353.8px;width:400px;text-align:center;letter-spacing:0.2px;">保利麓谷林语&gt;01栋&gt;007&gt;703</span>
<span class="t" style="top:633.5px;font-size:14px;color:#262626;line-height:20px;left:559.5px;width:400px;text-align:center;">13751234632</span>
<span class="t" style="top:633.5px;font-size:14px;color:#262626;line-height:20px;left:686.5px;width:400px;text-align:center;">1542.01</span>
<span class="t" style="top:633.5px;font-size:14px;color:#262626;line-height:20px;left:800.8px;width:400px;text-align:center;">1213.01</span>
<span class="t" style="top:633.5px;font-size:14px;color:#ff9f1c;line-height:20px;left:918.5px;width:400px;text-align:center;">1025.31</span>
<span class="t" style="top:633.5px;font-size:14px;color:#ff9f1c;line-height:20px;left:1035.5px;width:400px;text-align:center;">25.00</span>
<span class="t" style="top:634px;font-size:14px;color:#19be6b;line-height:20px;font-weight:400;left:1158px;width:400px;text-align:center;">已设置</span>
<div class="a" style="left:1435px;top:633px;width:156px;height:20px;border:1px solid #d9dbe0;border-radius:3px;background:#fff"></div>
<span class="t" style="top:633px;font-size:12px;color:#3c3e44;line-height:20px;left:1449px;letter-spacing:0.68px;">2020-12-13&nbsp; 00:00</span>
<svg style="left:1567px;top:637px" width="12" height="12" viewBox="0 0 12 12" fill="none" stroke="#9a9da5" stroke-width="0.9"><rect x="0.5" y="1.5" width="11" height="10" rx="1"/><path d="M0.5 4.5H11.5M3.5 0.2V2.6M8.5 0.2V2.6M2.6 6.8H9.4M2.6 9H9.4"/></svg>
<span class="t" style="top:633.5px;font-size:14px;color:#262626;line-height:20px;left:1498.5px;width:400px;text-align:center;">水电费单独计费模式</span>
<span class="t" style="top:633.5px;font-size:14px;color:#2d8cf0;line-height:20px;font-weight:400;left:1632px;width:400px;text-align:center;">查看</span>
<span class="t" style="top:689px;font-size:13px;color:#808695;line-height:20px;font-weight:400;left:801px;">当前</span>
<span class="t" style="top:689px;font-size:13px;color:#2d8cf0;line-height:20px;left:835px;">1</span>
<span class="t" style="top:689px;font-size:13px;color:#808695;line-height:20px;font-weight:400;left:842.5px;">/1</span>
<span class="t" style="top:689px;font-size:13px;color:#808695;line-height:20px;font-weight:400;left:857px;">页,</span>
<span class="t" style="top:689px;font-size:13px;color:#808695;line-height:20px;font-weight:400;left:879px;">共</span>
<span class="t" style="top:689px;font-size:13px;color:#ff9900;line-height:20px;left:902px;">8</span>
<span class="t" style="top:689px;font-size:13px;color:#808695;line-height:20px;font-weight:400;left:912px;letter-spacing:0.3px;">条数据</span>
<span class="t" style="top:689px;font-size:13px;color:#2d8cf0;line-height:20px;font-weight:400;left:979px;">首页</span>
<span class="t" style="top:689px;font-size:13px;color:#2d8cf0;line-height:20px;font-weight:400;left:1015.5px;">上一页</span>
<span class="t" style="top:689px;font-size:13px;color:#2d8cf0;line-height:20px;font-weight:400;left:1065.5px;">下一页</span>
<span class="t" style="top:689px;font-size:13px;color:#2d8cf0;line-height:20px;font-weight:400;left:1115.5px;">末页</span>
<span class="t" style="top:689px;font-size:13px;color:#808695;line-height:20px;font-weight:400;left:1159px;letter-spacing:0.4px;">跳转至</span>
<div class="a" style="left:1209px;top:686px;width:40px;height:26px;border:1px solid #e8eaec;border-radius:2px;background:#fff"></div>
<span class="t" style="top:689px;font-size:13px;color:#808695;line-height:20px;font-weight:400;left:1254px;">页</span>
<span class="t" style="top:689px;font-size:13px;color:#808695;line-height:20px;font-weight:400;left:1289.5px;">确定</span>
<div class="a" style="left:1434.5px;top:361px;width:229px;height:265px;background:#fff;border:1px solid #e1e4ea;border-radius:4px;box-shadow:0 2px 10px rgba(0,0,0,.16),0 0 3px rgba(0,0,0,.08)"></div>
<div class="a" style="left:1436px;top:397px;width:226px;height:1px;background:#e8eaec"></div>
<div class="a" style="left:1436px;top:587px;width:226px;height:1px;background:#e8eaec"></div>
<span class="t" style="top:372px;font-size:12px;color:#606266;line-height:20px;font-weight:400;left:1349.5px;width:400px;text-align:center;letter-spacing:0.25px;">2020年 12月</span>
<svg style="left:1451.1px;top:375.3px" width="13.8" height="12.65" viewBox="0 0 12 11" fill="none" stroke="#808695" stroke-width="1" stroke-linecap="round" stroke-linejoin="round"><path d="M6 1L1.5 5.5L6 10M11 1L6.5 5.5L11 10"/></svg>
<svg style="left:1477.1px;top:375.3px" width="13.8" height="12.65" viewBox="0 0 12 11" fill="none" stroke="#808695" stroke-width="1" stroke-linecap="round" stroke-linejoin="round"><path d="M8 1L3.5 5.5L8 10"/></svg>
<svg style="left:1608.1px;top:375.3px" width="13.8" height="12.65" viewBox="0 0 12 11" fill="none" stroke="#808695" stroke-width="1" stroke-linecap="round" stroke-linejoin="round"><path d="M4 1L8.5 5.5L4 10"/></svg>
<svg style="left:1633.6px;top:375.3px" width="13.8" height="12.65" viewBox="0 0 12 11" fill="none" stroke="#808695" stroke-width="1" stroke-linecap="round" stroke-linejoin="round"><path d="M1 1L5.5 5.5L1 10M6 1L10.5 5.5L6 10"/></svg>
<span class="t" style="top:409.5px;font-size:12px;color:#606266;line-height:20px;font-weight:400;left:1260px;width:400px;text-align:center;">日</span>
<span class="t" style="top:409.5px;font-size:12px;color:#606266;line-height:20px;font-weight:400;left:1289.7px;width:400px;text-align:center;">一</span>
<span class="t" style="top:409.5px;font-size:12px;color:#606266;line-height:20px;font-weight:400;left:1319.4px;width:400px;text-align:center;">二</span>
<span class="t" style="top:409.5px;font-size:12px;color:#606266;line-height:20px;font-weight:400;left:1349px;width:400px;text-align:center;">三</span>
<span class="t" style="top:409.5px;font-size:12px;color:#606266;line-height:20px;font-weight:400;left:1378.8px;width:400px;text-align:center;">四</span>
<span class="t" style="top:409.5px;font-size:12px;color:#606266;line-height:20px;font-weight:400;left:1408.4px;width:400px;text-align:center;">五</span>
<span class="t" style="top:409.5px;font-size:12px;color:#606266;line-height:20px;font-weight:400;left:1438px;width:400px;text-align:center;">六</span>
<span class="t" style="top:433.5px;font-size:12px;color:#c8cbd2;line-height:20px;left:1260px;width:400px;text-align:center;">29</span>
<span class="t" style="top:433.5px;font-size:12px;color:#c8cbd2;line-height:20px;left:1289.7px;width:400px;text-align:center;">30</span>
<span class="t" style="top:433.5px;font-size:12px;color:#606266;line-height:20px;left:1319.4px;width:400px;text-align:center;">1</span>
<span class="t" style="top:433.5px;font-size:12px;color:#606266;line-height:20px;left:1349px;width:400px;text-align:center;">2</span>
<span class="t" style="top:433.5px;font-size:12px;color:#606266;line-height:20px;left:1378.8px;width:400px;text-align:center;">3</span>
<span class="t" style="top:433.5px;font-size:12px;color:#606266;line-height:20px;left:1408.4px;width:400px;text-align:center;">4</span>
<span class="t" style="top:433.5px;font-size:12px;color:#606266;line-height:20px;left:1438px;width:400px;text-align:center;">5</span>
<span class="t" style="top:458.8px;font-size:12px;color:#606266;line-height:20px;left:1260px;width:400px;text-align:center;">6</span>
<span class="t" style="top:458.8px;font-size:12px;color:#606266;line-height:20px;left:1289.7px;width:400px;text-align:center;">7</span>
<span class="t" style="top:458.8px;font-size:12px;color:#606266;line-height:20px;left:1319.4px;width:400px;text-align:center;">8</span>
<span class="t" style="top:458.8px;font-size:12px;color:#606266;line-height:20px;left:1349px;width:400px;text-align:center;">9</span>
<span class="t" style="top:458.8px;font-size:12px;color:#606266;line-height:20px;left:1378.8px;width:400px;text-align:center;">10</span>
<span class="t" style="top:458.8px;font-size:12px;color:#606266;line-height:20px;left:1408.4px;width:400px;text-align:center;">11</span>
<span class="t" style="top:458.8px;font-size:12px;color:#606266;line-height:20px;left:1438px;width:400px;text-align:center;">12</span>
<span class="t" style="top:483.8px;font-size:12px;color:#606266;line-height:20px;left:1260px;width:400px;text-align:center;">13</span>
<span class="t" style="top:483.8px;font-size:12px;color:#606266;line-height:20px;left:1289.7px;width:400px;text-align:center;">14</span>
<span class="t" style="top:483.8px;font-size:12px;color:#606266;line-height:20px;left:1319.4px;width:400px;text-align:center;">15</span>
<span class="t" style="top:483.8px;font-size:12px;color:#606266;line-height:20px;left:1349px;width:400px;text-align:center;">16</span>
<span class="t" style="top:483.8px;font-size:12px;color:#606266;line-height:20px;left:1378.8px;width:400px;text-align:center;">17</span>
<span class="t" style="top:483.8px;font-size:12px;color:#606266;line-height:20px;left:1408.4px;width:400px;text-align:center;">18</span>
<span class="t" style="top:483.8px;font-size:12px;color:#606266;line-height:20px;left:1438px;width:400px;text-align:center;">19</span>
<span class="t" style="top:508.5px;font-size:12px;color:#606266;line-height:20px;left:1260px;width:400px;text-align:center;">20</span>
<span class="t" style="top:508.5px;font-size:12px;color:#606266;line-height:20px;left:1289.7px;width:400px;text-align:center;">21</span>
<span class="t" style="top:508.5px;font-size:12px;color:#606266;line-height:20px;left:1319.4px;width:400px;text-align:center;">22</span>
<span class="t" style="top:508.5px;font-size:12px;color:#606266;line-height:20px;left:1349px;width:400px;text-align:center;">23</span>
<span class="t" style="top:508.5px;font-size:12px;color:#606266;line-height:20px;left:1378.8px;width:400px;text-align:center;">24</span>
<span class="t" style="top:508.5px;font-size:12px;color:#606266;line-height:20px;left:1408.4px;width:400px;text-align:center;">25</span>
<span class="t" style="top:508.5px;font-size:12px;color:#606266;line-height:20px;left:1438px;width:400px;text-align:center;">26</span>
<span class="t" style="top:532.7px;font-size:12px;color:#606266;line-height:20px;left:1260px;width:400px;text-align:center;">27</span>
<span class="t" style="top:532.7px;font-size:12px;color:#606266;line-height:20px;left:1289.7px;width:400px;text-align:center;">28</span>
<span class="t" style="top:532.7px;font-size:12px;color:#606266;line-height:20px;left:1319.4px;width:400px;text-align:center;">29</span>
<span class="t" style="top:532.7px;font-size:12px;color:#606266;line-height:20px;left:1349px;width:400px;text-align:center;">30</span>
<span class="t" style="top:532.7px;font-size:12px;color:#606266;line-height:20px;left:1378.8px;width:400px;text-align:center;">31</span>
<span class="t" style="top:532.7px;font-size:12px;color:#c8cbd2;line-height:20px;left:1408.4px;width:400px;text-align:center;">1</span>
<span class="t" style="top:532.7px;font-size:12px;color:#c8cbd2;line-height:20px;left:1438px;width:400px;text-align:center;">2</span>
<span class="t" style="top:557.5px;font-size:12px;color:#c8cbd2;line-height:20px;left:1260px;width:400px;text-align:center;">3</span>
<span class="t" style="top:557.5px;font-size:12px;color:#c8cbd2;line-height:20px;left:1289.7px;width:400px;text-align:center;">4</span>
<span class="t" style="top:557.5px;font-size:12px;color:#c8cbd2;line-height:20px;left:1319.4px;width:400px;text-align:center;">5</span>
<span class="t" style="top:557.5px;font-size:12px;color:#c8cbd2;line-height:20px;left:1349px;width:400px;text-align:center;">6</span>
<span class="t" style="top:557.5px;font-size:12px;color:#c8cbd2;line-height:20px;left:1378.8px;width:400px;text-align:center;">7</span>
<span class="t" style="top:557.5px;font-size:12px;color:#c8cbd2;line-height:20px;left:1408.4px;width:400px;text-align:center;">8</span>
<span class="t" style="top:557.5px;font-size:12px;color:#c8cbd2;line-height:20px;left:1438px;width:400px;text-align:center;">9</span>
<span class="t" style="top:596.5px;font-size:12px;color:#2d8cf0;line-height:20px;font-weight:400;left:1452.5px;">选择时间</span>
<div class="a" style="left:1604px;top:597px;width:41px;height:20px;border:1px solid #dcdfe6;border-radius:3px;background:#fff"></div>
<span class="t" style="top:596.5px;font-size:12px;color:#2d8cf0;line-height:20px;font-weight:400;left:1424.5px;width:400px;text-align:center;">确定</span>
<svg style="left:0;top:0;pointer-events:none" width="1920" height="940" viewBox="0 0 1920 940"><g filter="url(#wsh)" fill="#fff" stroke="none"><g clip-path="url(#wclip)">
<circle cx="957.5" cy="489" r="179.5" fill="none" stroke="#fff" stroke-width="17"/>
<circle cx="957.5" cy="489" r="114.5" fill="none" stroke="#fff" stroke-width="11"/>
<text font-family="Liberation Sans,sans-serif" font-size="28" letter-spacing="1.9" text-anchor="middle" stroke="#fff" stroke-width="0.9" stroke-linejoin="round"><textPath href="#wtop" startOffset="50.6%">www.jisheyun.com</textPath></text>
<text font-family="Liberation Sans,Noto Sans CJK SC,sans-serif" font-weight="700" font-size="24.5" letter-spacing="1.9" text-anchor="middle"><textPath href="#wbot" startOffset="50%">版权所有，盗图必究</textPath></text>
</g>
<path fill-rule="evenodd" d="M745 429H1169A10 10 0 0 1 1179 439V538.5A10 10 0 0 1 1169 548.5H745A10 10 0 0 1 735 538.5V439A10 10 0 0 1 745 429Z M748.5 438.5H1165.5A4 4 0 0 1 1169.5 442.5V535A4 4 0 0 1 1165.5 539H748.5A4 4 0 0 1 744.5 535V442.5A4 4 0 0 1 748.5 438.5Z"/>
<text x="897.31" y="517.6" transform="scale(0.93 1)" font-family="Liberation Sans,Noto Sans CJK SC,sans-serif" font-weight="900" font-size="69.5" text-anchor="middle">集</text>
<text x="983.33" y="517.6" transform="scale(0.93 1)" font-family="Liberation Sans,Noto Sans CJK SC,sans-serif" font-weight="900" font-size="69.5" text-anchor="middle">社</text>
<text x="1065.59" y="517.6" transform="scale(0.93 1)" font-family="Liberation Sans,Noto Sans CJK SC,sans-serif" font-weight="900" font-size="69.5" text-anchor="middle">抄</text>
<text x="1148.39" y="517.6" transform="scale(0.93 1)" font-family="Liberation Sans,Noto Sans CJK SC,sans-serif" font-weight="900" font-size="69.5" text-anchor="middle">表</text>
<circle cx="782" cy="488.6" r="8"/><circle cx="1134" cy="488.6" r="8"/></g></svg>

</div></body></html>
